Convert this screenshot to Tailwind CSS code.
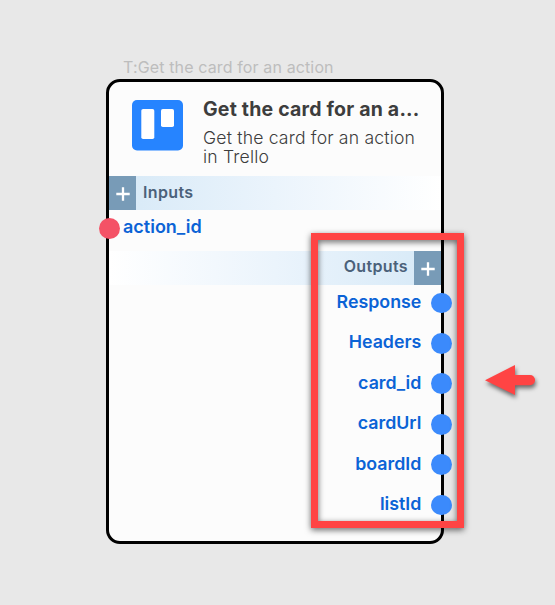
<!DOCTYPE html>
<html lang="en">
<head>
<meta charset="utf-8">
<title>Get the card for an action</title>
<script src="https://cdn.jsdelivr.net/npm/@tailwindcss/browser@4"></script>
</head>
<body class="relative h-[605px] w-[555px] overflow-hidden bg-[#e8e8e8] font-['Inter',sans-serif]">
<main class="pl-[106px] pt-[57px]">
  <div class="h-[22px] pl-[17px] text-[16px] leading-[20px] tracking-[0.13px] whitespace-nowrap text-[#bdbdbd]">T:Get the card for an action</div>
  <section class="flex h-[465px] w-[338px] flex-col rounded-[14px] border-3 border-black bg-[#fcfcfc]">
    <header class="flex h-[94px] pl-[23px] pt-[18px]">
      <svg class="size-[51px] shrink-0" viewBox="0 0 51 51">
        <rect width="51" height="50.5" rx="5" fill="#2684ff"/>
        <rect x="9.3" y="9" width="13" height="30" rx="1.8" fill="#fff"/>
        <rect x="29" y="9" width="13" height="18" rx="1.8" fill="#fff"/>
      </svg>
      <div class="ml-[20px] whitespace-nowrap text-[#3d3d3d]">
        <h1 class="mt-[-3px] text-[19.5px] leading-[24px] tracking-[0.2px] font-bold">Get the card for an a...</h1>
        <p class="mt-[7px] text-[17.6px] leading-[19px] tracking-[0.18px] font-[350]">Get the card for an action<br>in Trello</p>
      </div>
    </header>
    <div class="flex h-[34px] bg-linear-to-r from-[#d6e9f7] via-[#ebf4fc] to-white">
      <div class="flex w-[27px] items-center justify-center bg-[#789bb7]">
        <svg class="mt-[2px] size-[14px]" viewBox="0 0 14 14" stroke="#fff" stroke-width="2.3"><path d="M7 .3v13.4M.3 7h13.4"/></svg>
      </div>
      <span class="pl-[7px] text-[16px] leading-[32px] tracking-[0.35px] font-semibold text-[#4b617a]">Inputs</span>
    </div>
    <div class="flex h-[41px] items-start">
      <i class="mt-[8px] -ml-[10px] size-[20.5px] shrink-0 rounded-full bg-[#f45266]"></i>
      <span class="pl-[3.5px] pt-[4px] text-[18px] leading-[26px] font-semibold text-[#0b63d6]">action_id</span>
    </div>
    <div class="flex h-[34px] justify-end bg-linear-to-l from-[#d6e9f7] via-[#ebf4fc] to-white">
      <span class="pr-[6px] text-[16px] leading-[31px] tracking-[0.35px] font-semibold text-[#4b617a]">Outputs</span>
      <div class="flex w-[27px] items-center justify-center bg-[#789bb7]">
        <svg class="mt-[2px] size-[14px]" viewBox="0 0 14 14" stroke="#fff" stroke-width="2.3"><path d="M7 .3v13.4M.3 7h13.4"/></svg>
      </div>
    </div>
    <ul class="-mr-[11px] flex flex-col text-[17.8px] leading-[26px] font-semibold text-[#0b63d6]">
      <li class="flex h-[40.4px] justify-end gap-[10px] pt-[4px]">Response<i class="mt-[3.7px] size-[20.7px] rounded-full bg-[#3b8afc]"></i></li>
      <li class="flex h-[40.4px] justify-end gap-[10px] pt-[4px]">Headers<i class="mt-[3.7px] size-[20.7px] rounded-full bg-[#3b8afc]"></i></li>
      <li class="flex h-[40.4px] justify-end gap-[10px] pt-[4px]">card_id<i class="mt-[3.7px] size-[20.7px] rounded-full bg-[#3b8afc]"></i></li>
      <li class="flex h-[40.4px] justify-end gap-[10px] pt-[4px]">cardUrl<i class="mt-[3.7px] size-[20.7px] rounded-full bg-[#3b8afc]"></i></li>
      <li class="flex h-[40.4px] justify-end gap-[10px] pt-[4px]">boardId<i class="mt-[3.7px] size-[20.7px] rounded-full bg-[#3b8afc]"></i></li>
      <li class="flex h-[40.4px] justify-end gap-[10px] pt-[4px]">listId<i class="mt-[3.7px] size-[20.7px] rounded-full bg-[#3b8afc]"></i></li>
    </ul>
  </section>
</main>
<!-- Callout frame and arrow over the outputs -->
<div class="absolute left-[311px] top-[233px] h-[295px] w-[153px] border-7 border-[#ff4444] drop-shadow-[0_2px_3px_rgba(0,0,0,0.6)]"></div>
<svg class="absolute left-[480px] top-[360px] h-[42px] w-[60px] drop-shadow-[1px_3px_2px_rgba(0,0,0,0.55)]" viewBox="0 0 60 42">
  <path d="M5 20.2 35 5v10h15a5 5 0 0 1 0 10.2H35V35z" fill="#ff4444"/>
</svg>
</body>
</html>
